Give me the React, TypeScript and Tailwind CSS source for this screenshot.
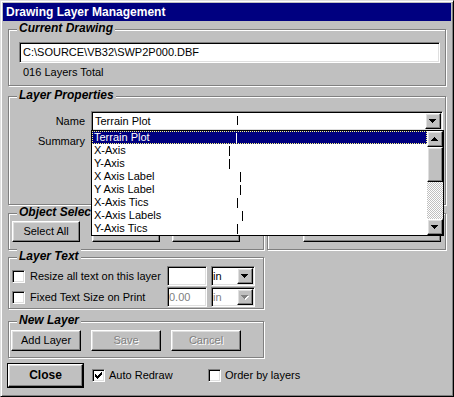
import React from "react";

const raised =
  "border border-t-white border-l-white border-r-black border-b-black shadow-[inset_-1px_-1px_0_#808080,inset_1px_1px_0_#dfdfdf] bg-[#c0c0c0]";
const sunken =
  "border border-t-[#808080] border-l-[#808080] border-r-white border-b-white shadow-[inset_1px_1px_0_#000,inset_-1px_-1px_0_#dfdfdf] bg-white";

const layers: [string, number][] = [
  ["Terrain Plot", 144],
  ["X-Axis", 137],
  ["Y-Axis", 137],
  ["X Axis Label", 148],
  ["Y Axis Label", 148],
  ["X-Axis Tics", 145],
  ["X-Axis Labels", 150],
  ["Y-Axis Tics", 145],
];

function Arrow({up = false, disabled = false}: {up?: boolean; disabled?: boolean}) {
  const d = up
    ? "M3 0H4V1H5V2H6V3H7V4H0V3H1V2H2V1H3Z"
    : "M0 0H7V1H6V2H5V3H4V4H3V3H2V2H1V1H0Z";
  return (
    <svg width="8" height="5" viewBox="0 0 8 5" shapeRendering="crispEdges">
      {disabled ? <path d={d} fill="#fff" transform="translate(1 1)" /> : null}
      <path d={d} fill={disabled ? "#808080" : "#000"} />
    </svg>
  );
}

function Check({checked = false}: {checked?: boolean}) {
  return (
    <span className={`${sunken} flex h-[13px] w-[13px] shrink-0 items-center justify-center`}>
      {checked ? (
        <svg width="7" height="7" viewBox="0 0 7 7" shapeRendering="crispEdges">
          <path d="M0 2h1v3H0z M1 3h1v3H1z M2 4h1v3H2z M3 3h1v3H3z M4 2h1v3H4z M5 1h1v3H5z M6 0h1v3H6z" fill="#000" />
        </svg>
      ) : null}
    </span>
  );
}

function Button({label, className = "", disabled = false}: {label: string; className?: string; disabled?: boolean}) {
  return (
    <div className={`${raised} flex items-center justify-center ${className}`}>
      <span className={disabled ? "text-[#808080] [text-shadow:1px_1px_0_#fff]" : ""}>{label}</span>
    </div>
  );
}

// etched frame, label sits on the top line
function Group({label, labelClass = "", className = "", children}: {label?: string; labelClass?: string; className?: string; children?: React.ReactNode}) {
  return (
    <div className={`relative border border-[#808080] shadow-[1px_1px_0_#fff,inset_1px_1px_0_#fff] ${className}`}>
      {label ? (
        <span className={`absolute left-[8px] top-[-9px] overflow-hidden whitespace-nowrap bg-[#c0c0c0] px-[2px] text-[12px] font-bold italic leading-[14px] ${labelClass}`}>
          {label}
        </span>
      ) : null}
      {children}
    </div>
  );
}

function SmallCombo({value, disabled = false}: {value: string; disabled?: boolean}) {
  return (
    <div className={`${sunken} ml-[4px] flex h-[20px] w-[44px] items-center pr-[1px]`}>
      <span className={`flex-1 pl-[1px] ${disabled ? "text-[#808080]" : ""}`}>{value}</span>
      <div className={`${raised} flex h-[16px] w-[16px] items-center justify-center`}>
        <Arrow disabled={disabled} />
      </div>
    </div>
  );
}

export default function App() {
  return (
    <div className="h-[397px] w-[454px] border border-t-[#dfdfdf] border-l-[#dfdfdf] border-r-black border-b-black bg-[#c0c0c0] p-[2px] font-['Liberation_Sans',Arial,sans-serif] text-[11px] leading-[13px] text-black shadow-[inset_1px_1px_0_#fff,inset_-1px_-1px_0_#808080]">
      <div className="flex h-[18px] items-center bg-[#000080] pl-[3px] text-[12px] font-bold text-white">
        Drawing Layer Management
      </div>

      <div className="flex flex-col pl-[5px]">
        <Group label="Current Drawing" className="mt-[8px] h-[57px] w-[438px]">
          <div className={`${sunken} ml-[10px] mt-[12px] flex h-[21px] w-[421px] items-center pl-[3px]`}>
            C:\SOURCE\VB32\SWP2P000.DBF
          </div>
          <div className="ml-[14px] mt-[3px]">016 Layers Total</div>
        </Group>

        <Group label="Layer Properties" className="z-10 mt-[10px] h-[109px] w-[438px]">
          <div className="mt-[14px] flex items-center">
            <span className="w-[76px] text-right">Name</span>
            <div className="relative ml-[6px]">
              <div className={`${sunken} relative flex h-[20px] w-[352px] items-center pr-[1px]`}>
                <span className="flex-1 pl-[3px]">Terrain Plot</span>
                <span className="absolute left-[145px] top-[4px] h-[9px] w-px bg-black" />
                <div className={`${raised} flex h-[16px] w-[16px] items-center justify-center`}>
                  <Arrow />
                </div>
              </div>

              <div className="absolute left-0 top-[19px] z-20 flex h-[106px] w-[353px] border border-black bg-white">
                <div className="flex-1">
                  {layers.map(([name, tick], i) => (
                    <div
                      key={name}
                      className={`relative h-[13px] pl-[2px] ${i === 0 ? "bg-[#000080] text-white outline-1 -outline-offset-1 outline-dotted outline-[#ffff80]" : ""}`}
                    >
                      {name}
                      <span
                        className={`absolute top-[2px] h-[10px] w-px ${i === 0 ? "bg-white" : "bg-black"}`}
                        style={{left: tick}}
                      />
                    </div>
                  ))}
                </div>
                <div className="flex w-[16px] flex-col">
                  <div className={`${raised} flex h-[16px] items-center justify-center`}>
                    <Arrow up />
                  </div>
                  <div className={`${raised} h-[35px]`} />
                  <div className="flex-1 bg-[repeating-conic-gradient(#c0c0c0_0%_25%,#ffffff_0%_50%)] bg-[length:2px_2px]" />
                  <div className={`${raised} flex h-[16px] items-center justify-center`}>
                    <Arrow />
                  </div>
                </div>
              </div>
            </div>
          </div>
          <div className="mt-[4px] flex">
            <span className="w-[76px] text-right">Summary</span>
          </div>
        </Group>

        <div className="mt-[8px] flex gap-[3px]">
          <Group label="Object Selection" labelClass="max-w-[74px]" className="h-[37px] w-[256px]">
            <div className="mt-[7px] flex gap-[12px] pl-[3px]">
              <Button label="Select All" className="h-[21px] w-[68px]" />
              <Button label="" className="h-[21px] w-[68px]" />
              <Button label="" className="h-[21px] w-[68px]" />
            </div>
          </Group>
          <Group className="h-[37px] w-[179px]">
            <Button label="" className="ml-[35px] mt-[7px] h-[21px] w-[138px]" />
          </Group>
        </div>

        <Group label="Layer Text" className="mt-[7px] h-[52px] w-[256px]">
          <div className="mt-[8px] flex h-[20px] items-center pl-[3px]">
            <Check />
            <span className="ml-[5px] w-[137px]">Resize all text on this layer</span>
            <div className={`${sunken} h-[20px] w-[40px]`} />
            <SmallCombo value="in" />
          </div>
          <div className="mt-[1px] flex h-[20px] items-center pl-[3px]">
            <Check />
            <span className="ml-[5px] w-[137px]">Fixed Text Size on Print</span>
            <div className={`${sunken} flex h-[20px] w-[40px] items-center pl-[1px] text-[#808080]`}>0.00</div>
            <SmallCombo value="in" disabled />
          </div>
        </Group>

        <Group label="New Layer" className="mt-[12px] h-[37px] w-[256px]">
          <div className="mt-[8px] flex gap-[10px] pl-[2px]">
            <Button label="Add Layer" className="h-[21px] w-[70px]" />
            <Button label="Save" disabled className="h-[21px] w-[70px]" />
            <Button label="Cancel" disabled className="h-[21px] w-[70px]" />
          </div>
        </Group>

        <div className="mt-[5px] flex items-center">
          <div className="ml-[-1px] h-[25px] w-[77px] border border-black">
            <Button label="Close" className="h-full w-full text-[12px] font-bold" />
          </div>
          <span className="ml-[8px]">
            <Check checked />
          </span>
          <span className="ml-[4px] w-[99px]">Auto Redraw</span>
          <Check />
          <span className="ml-[4px]">Order by layers</span>
        </div>
      </div>
    </div>
  );
}
